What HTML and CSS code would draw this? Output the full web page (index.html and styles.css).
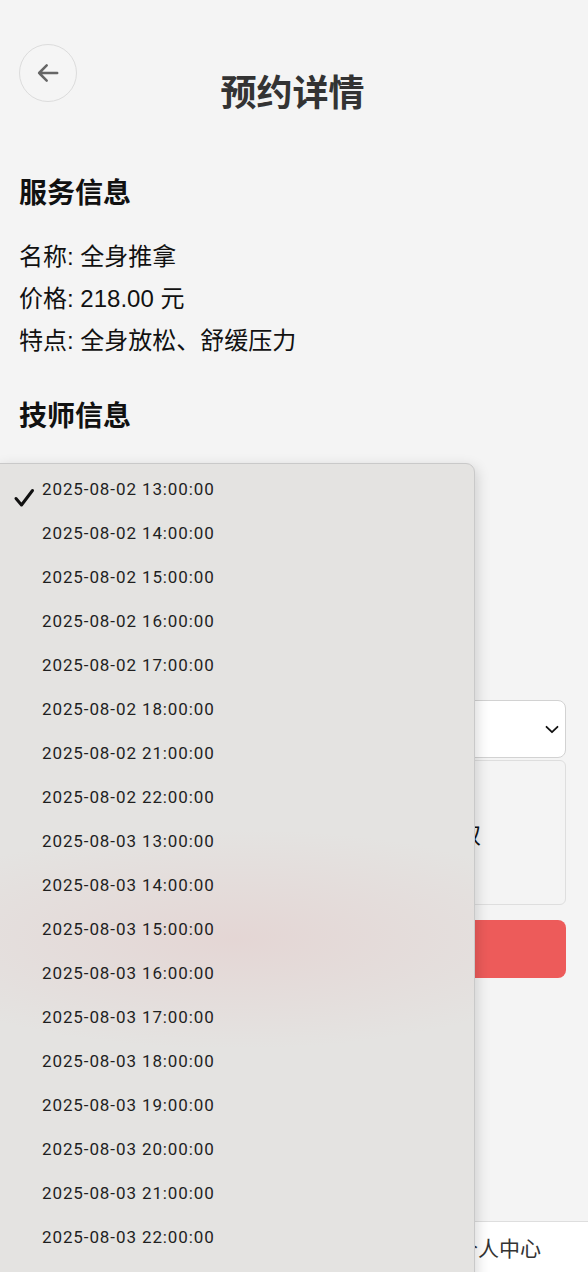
FILE: index.html
```html
<!DOCTYPE html>
<html lang="zh-CN">
<head>
<meta charset="utf-8">
<title>预约详情</title>
<link rel="stylesheet" href="styles.css">
</head>
<body>
<div class="page">
  <header class="header">
    <button class="back" aria-label="返回">
      <svg width="26" height="26" viewBox="0 0 24 24" fill="none" stroke="#666" stroke-width="2.3" stroke-linecap="round" stroke-linejoin="round"><path d="M20.5 12H3.8M10.8 5L3.8 12l7 7"/></svg>
    </button>
    <h1 class="title">预约详情</h1>
  </header>

  <section class="section">
    <h2 class="heading">服务信息</h2>
    <p class="line">名称: 全身推拿</p>
    <p class="line">价格: 218.00 元</p>
    <p class="line">特点: 全身放松、舒缓压力</p>
  </section>

  <section class="section tech">
    <h2 class="heading">技师信息</h2>
    <div class="tech-lines">
      <p class="line">姓名: 王师傅</p>
      <p class="line">工龄: 8 年</p>
      <p class="line">擅长: 推拿</p>
    </div>
  </section>

  <div class="form">
    <div class="select">
      <span class="select-value">2025-08-02 13:00:00</span>
      <svg class="chev" width="14" height="9" viewBox="0 0 14 9" fill="none" stroke="#111" stroke-width="1.8" stroke-linecap="round" stroke-linejoin="round"><path d="M1.5 1.8L7 7.2l5.5-5.4"/></svg>
    </div>
    <div class="textarea">请告知您的力度偏好、身体状况、是否需要双</div>
    <button class="submit">确认预约</button>
  </div>
</div>

<nav class="tabbar">
  <div class="tab">首页</div>
  <div class="tab">我的预约</div>
  <div class="tab tab-me">个人中心</div>
</nav>

<div class="menu">
  <div class="item"><svg class="check" width="22" height="20" viewBox="0 0 22 20" fill="none" stroke="#111" stroke-width="3" stroke-linecap="round" stroke-linejoin="round"><path d="M3 10.5l5.5 6.5L19.5 2.5"/></svg>2025-08-02 13:00:00</div>
  <div class="item">2025-08-02 14:00:00</div>
  <div class="item">2025-08-02 15:00:00</div>
  <div class="item">2025-08-02 16:00:00</div>
  <div class="item">2025-08-02 17:00:00</div>
  <div class="item">2025-08-02 18:00:00</div>
  <div class="item">2025-08-02 21:00:00</div>
  <div class="item">2025-08-02 22:00:00</div>
  <div class="item">2025-08-03 13:00:00</div>
  <div class="item">2025-08-03 14:00:00</div>
  <div class="item">2025-08-03 15:00:00</div>
  <div class="item">2025-08-03 16:00:00</div>
  <div class="item">2025-08-03 17:00:00</div>
  <div class="item">2025-08-03 18:00:00</div>
  <div class="item">2025-08-03 19:00:00</div>
  <div class="item">2025-08-03 20:00:00</div>
  <div class="item">2025-08-03 21:00:00</div>
  <div class="item">2025-08-03 22:00:00</div>
</div>
</body>
</html>
```

FILE: styles.css
```css
* { box-sizing: border-box; }
html, body { margin: 0; padding: 0; }
body {
  width: 588px;
  height: 1272px;
  overflow: hidden;
  position: relative;
  background: #f4f4f4;
  font-family: "Liberation Sans", "Noto Sans CJK SC", sans-serif;
  color: #111;
}
.page {
  padding: 44px 22px 0 19px;
}
.header {
  display: grid;
  grid-template-columns: 58px 1fr 58px;
  align-items: start;
}
.back {
  width: 58px;
  height: 58px;
  border-radius: 50%;
  border: 1.5px solid #dcdcdc;
  background: #f5f5f5;
  display: flex;
  align-items: center;
  justify-content: center;
  padding: 0;
}
.title {
  margin: 25px 0 0;
  text-align: center;
  font-size: 36px;
  line-height: 43px;
  font-weight: 700;
  color: #333;
  font-family: "Noto Sans CJK SC", sans-serif;
}
.section { margin-top: 59px; }
.tech { margin-top: 32px; }
.heading {
  margin: 0 0 25px;
  font-size: 28px;
  line-height: 40px;
  font-weight: 700;
  font-family: "Noto Sans CJK SC", sans-serif;
  color: #111;
}
.tech-lines { margin-top: 40px; }
.line {
  margin: 0;
  font-size: 24px;
  line-height: 42px;
  color: #111;
}
.form {
  margin-top: 100px;
  display: flex;
  flex-direction: column;
}
.select {
  height: 58px;
  background: #fff;
  border: 1px solid #d2d2d2;
  border-radius: 8px;
  display: flex;
  align-items: center;
  justify-content: space-between;
  padding: 0 6px 0 16px;
  font-size: 20px;
}
.textarea {
  margin-top: 2px;
  height: 145px;
  border: 1px solid #dedede;
  border-radius: 6px;
  background: #f4f4f4;
  font-size: 22px;
  font-family: "Noto Sans CJK SC", sans-serif;
  display: flex;
  align-items: center;
  padding: 0 0 0 21px;
  white-space: nowrap;
  overflow: hidden;
  color: #111;
}
.submit {
  margin-top: 15px;
  height: 58px;
  border: none;
  border-radius: 8px;
  background: #ed5b5a;
  color: #fff;
  font-size: 22px;
  font-family: "Noto Sans CJK SC", sans-serif;
}
.tabbar {
  position: absolute;
  left: 0;
  right: 0;
  bottom: 0;
  height: 51px;
  background: #fff;
  border-top: 1px solid #dedede;
  display: grid;
  grid-template-columns: 1fr 1fr 1fr;
  align-items: center;
  font-size: 21px;
  color: #333;
  font-family: "Noto Sans CJK SC", sans-serif;
}
.tab { text-align: center; }
.tab-me { padding-left: 18px; }

.menu {
  position: absolute;
  left: -2px;
  top: 463px;
  width: 477px;
  height: 840px;
  padding-top: 3px;
  background:
    radial-gradient(ellipse 360px 110px at 235px 475px, rgba(228, 175, 175, 0.25), rgba(228, 175, 175, 0) 100%),
    #e4e3e1;
  border: 1px solid #c9c9c9;
  border-radius: 0 9px 0 0;
  box-shadow: 2px 4px 14px rgba(0, 0, 0, 0.16);
}
.item {
  position: relative;
  height: 44px;
  display: flex;
  align-items: center;
  padding-left: 43px;
  font-family: Roboto, "Liberation Sans", sans-serif;
  font-size: 17px;
  letter-spacing: 0.9px;
  color: #1f1f1f;
}
.check {
  position: absolute;
  left: 14px;
  top: 21px;
}
```
